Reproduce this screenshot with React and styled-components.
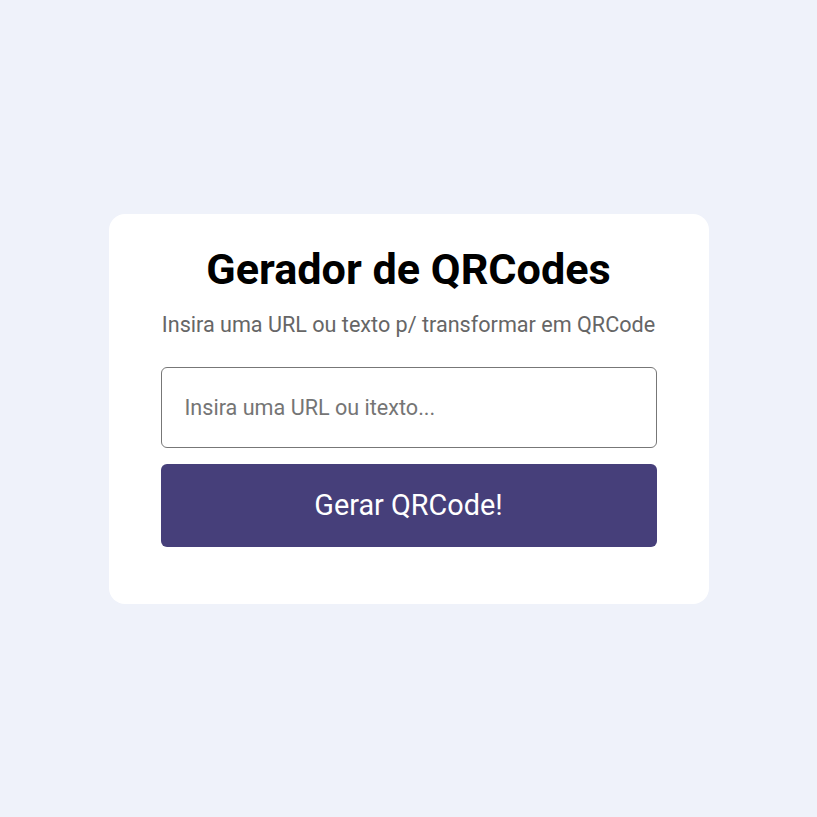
import styled, { createGlobalStyle } from "styled-components";

const GlobalStyle = createGlobalStyle`
  * {
    box-sizing: border-box;
  }
  body {
    margin: 0;
    background: #eff2fa;
    font-family: Roboto, "Liberation Sans", sans-serif;
  }
`;

const Page = styled.main`
  min-height: 817px;
  display: flex;
  align-items: center;
  justify-content: center;
`;

const Card = styled.section`
  width: 600px;
  background: #ffffff;
  border-radius: 16px;
  padding: 30px 52px 57px;
  display: flex;
  flex-direction: column;
  align-items: center;
`;

const Title = styled.h1`
  margin: 0;
  font-size: 43.2px;
  font-weight: 700;
  line-height: 52px;
  color: #000000;
`;

const Subtitle = styled.p`
  margin: 16px 0 29px;
  font-size: 21.6px;
  line-height: 26px;
  color: #666666;
  white-space: nowrap;
`;

const Input = styled.input`
  width: 100%;
  height: 81px;
  padding: 0 23px;
  border: 1px solid #777777;
  border-radius: 6px;
  font-family: inherit;
  font-size: 21.6px;
  color: #333333;
  outline: none;

  &::placeholder {
    color: #757575;
  }
`;

const Button = styled.button`
  width: 100%;
  height: 83px;
  margin-top: 16px;
  border: none;
  border-radius: 6px;
  background: #463f7a;
  color: #ffffff;
  font-family: inherit;
  font-size: 28.8px;
  cursor: pointer;
`;

const App = () => {
  return (
    <Page>
      <GlobalStyle />
      <Card>
        <Title>Gerador de QRCodes</Title>
        <Subtitle>Insira uma URL ou texto p/ transformar em QRCode</Subtitle>
        <Input type="text" placeholder="Insira uma URL ou itexto..." />
        <Button>Gerar QRCode!</Button>
      </Card>
    </Page>
  );
};

export default App;
